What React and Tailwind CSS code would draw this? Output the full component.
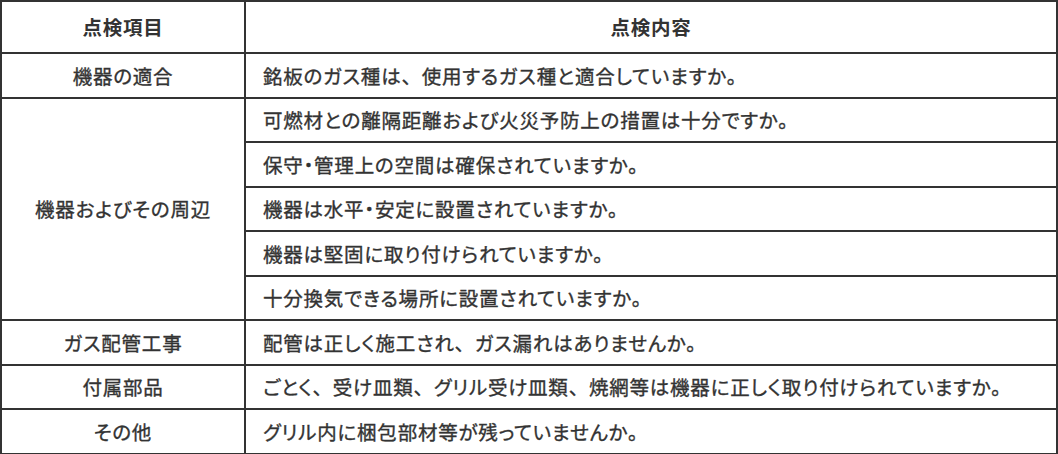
const rows = [
  { item: '機器の適合', checks: ['銘板のガス種は、使用するガス種と適合していますか。'] },
  {
    item: '機器およびその周辺',
    checks: [
      '可燃材との離隔距離および火災予防上の措置は十分ですか。',
      '保守・管理上の空間は確保されていますか。',
      '機器は水平・安定に設置されていますか。',
      '機器は堅固に取り付けられていますか。',
      '十分換気できる場所に設置されていますか。',
    ],
  },
  { item: 'ガス配管工事', checks: ['配管は正しく施工され、ガス漏れはありませんか。'] },
  { item: '付属部品', checks: ['ごとく、受け皿類、グリル受け皿類、焼網等は機器に正しく取り付けられていますか。'] },
  { item: 'その他', checks: ['グリル内に梱包部材等が残っていませんか。'] },
];

const cell = 'border-2 border-[#333] text-[19.5px] tracking-[0.04em] [font-feature-settings:"palt"]';

// full-width comma, like the original
function Text({ children }) {
  const parts = children.split('、');
  return parts.map((p, i) => (
    <span key={i}>
      {p}
      {i < parts.length - 1 && <span className="[font-feature-settings:normal]">、</span>}
    </span>
  ));
}

export default function App() {
  return (
    <div
      className="w-[1058px] h-[454px] bg-white text-[#333]"
      style={{ fontFamily: '"Noto Sans CJK JP", "Noto Sans", sans-serif' }}
    >
      <table className="w-full table-fixed border-collapse border-2 border-[#333]">
        <colgroup>
          <col className="w-[244px]" />
          <col />
        </colgroup>
        <thead>
          <tr className="h-[52px]">
            <th className={`${cell} text-center font-bold`}>点検項目</th>
            <th className={`${cell} text-center font-bold`}>点検内容</th>
          </tr>
        </thead>
        <tbody>
          {rows.map((r) =>
            r.checks.map((c, i) => (
              <tr key={r.item + i} className="h-[44.5px]">
                {i === 0 && (
                  <td rowSpan={r.checks.length} className={`${cell} text-center [-webkit-text-stroke:0.35px]`}>
                    {r.item}
                  </td>
                )}
                <td className={`${cell} px-[17px] [-webkit-text-stroke:0.35px]`}>
                  <Text>{c}</Text>
                </td>
              </tr>
            ))
          )}
        </tbody>
      </table>
    </div>
  );
}
